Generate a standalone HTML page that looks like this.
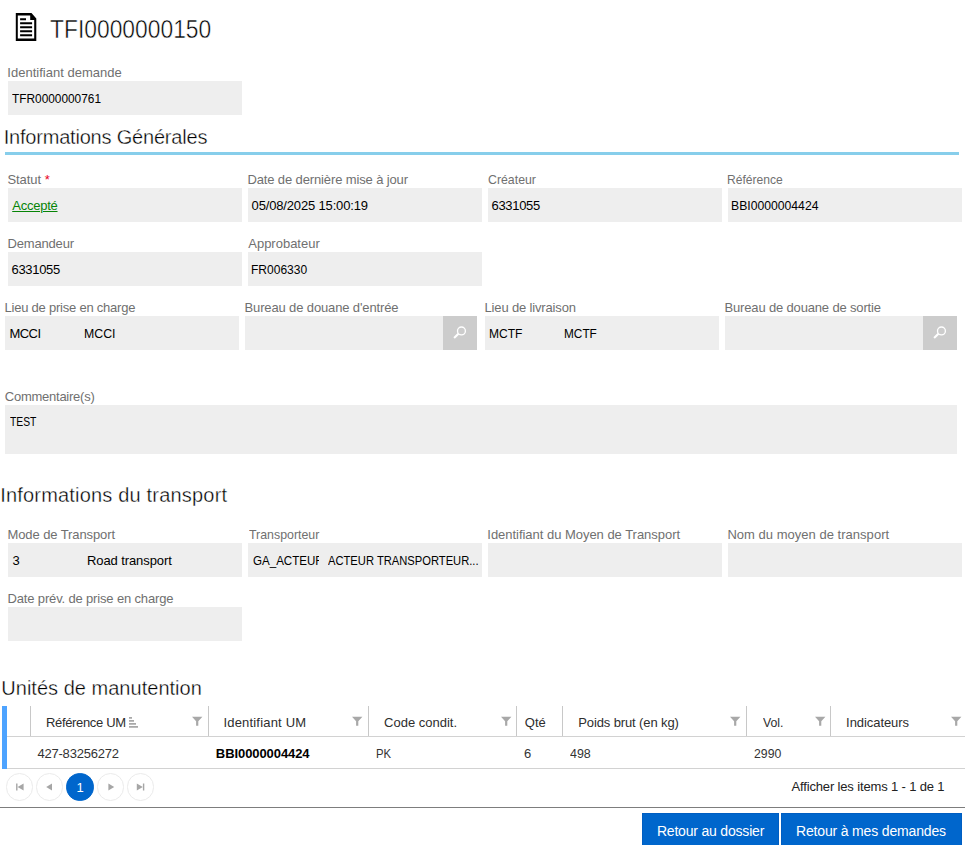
<!DOCTYPE html>
<html lang="fr">
<head>
<meta charset="utf-8">
<title>TFI0000000150</title>
<style>
*{box-sizing:border-box;margin:0;padding:0}
html,body{width:965px;height:845px;overflow:hidden;background:#fff}
body{position:relative;font-family:"Liberation Sans",Arial,sans-serif;color:#000}
.t{position:absolute;white-space:nowrap;line-height:1;display:block;font-weight:400;transform-origin:0 50%}
.title{color:#000;-webkit-text-stroke:0.5px #fff}
.h2{color:#000;-webkit-text-stroke:0.36px #fff}
.lbl{color:#707070}
.val{color:#000}
.link{color:#068406;text-decoration:underline;text-underline-offset:1px;text-decoration-thickness:1px}
.th{color:#2e2e2e}
.td{color:#333}
.tdb{color:#000;font-weight:700}
.pinfo{color:#222}
.btxt{color:#fff}
.pg1{color:#fff}
.req{color:#e8001c}
.box{position:absolute;background:#eee;height:34px}
.sbtn{position:absolute;background:#ccc;width:34px;height:34px;border:0}
.sbtn svg{position:absolute;left:0;top:0}
.rule{position:absolute;left:5px;width:954px;top:152px;height:3px;background:#87ceeb}
.bar{position:absolute;left:2px;top:706px;width:5px;height:63px;background:#4da3ff}
.hl{position:absolute;height:1px;background:#d2d2d2}
.vsep{position:absolute;top:706px;width:1px;height:30px;background:#c8c8c8}
.pc{position:absolute;top:773.3px;width:27.4px;height:27.4px;border-radius:50%;border:1px solid #ebebeb;background:#fff}
.pc.on{background:#0066cc;border-color:#0066cc}
.btn{position:absolute;top:813px;height:38px;background:#0066cc;border:1px solid #005ec2}
.ic{position:absolute;overflow:visible}
.clip{position:absolute;overflow:hidden;height:34px}
</style>
</head>
<body>
<header>
<svg class="ic" style="left:15px;top:12px" width="23" height="30" viewBox="15 12 23 30" aria-hidden="true">
<path fill-rule="evenodd" d="M15.8 13.1 H31.5 L36.3 18.4 V40.9 H15.8 Z M17.8 15.5 V38.4 H34.2 V20 H30.2 V15.5 Z" fill="#000"/>
<path d="M20.1 19.2 H26 M20.1 23.2 H32.1 M20.1 27.2 H32.1 M20.1 31.2 H32.1 M20.1 35.2 H32.1" stroke="#000" stroke-width="2" fill="none"/>
</svg>
<h1 class="t title" style="left:49.89px;top:16.84px;font-size:25px;transform:scaleX(0.9135)">TFI0000000150</h1>
</header>
<main>
<section>
<label class="t lbl" style="left:7.30px;top:66.00px;font-size:13px;letter-spacing:0.016px">Identifiant demande</label>
<div class="box" style="left:8px;top:81px;width:234px;height:34px"></div>
<span class="t val" style="left:11.79px;top:92.00px;font-size:13px;transform:scaleX(0.9122)">TFR0000000761</span>
</section>
<section>
<h2 class="t h2" style="left:3.64px;top:127.07px;font-size:20px;letter-spacing:-0.196px">Informations Générales</h2>
<div class="rule"></div>
<label class="t lbl" style="left:7.46px;top:173.00px;font-size:13px;letter-spacing:-0.069px">Statut</label>
<span class="t req" style="left:44.70px;top:173.00px;font-size:13px">*</span>
<div class="box" style="left:8px;top:188px;width:234px;height:34px"></div>
<a class="t link" style="left:12.22px;top:199.00px;font-size:13px;letter-spacing:-0.239px">Accepté</a>
<label class="t lbl" style="left:247.44px;top:173.00px;font-size:13px;letter-spacing:-0.127px">Date de dernière mise à jour</label>
<div class="box" style="left:248px;top:188px;width:234px;height:34px"></div>
<span class="t val" style="left:251.57px;top:199.00px;font-size:13px;letter-spacing:-0.157px">05/08/2025 15:00:19</span>
<label class="t lbl" style="left:487.71px;top:173.00px;font-size:13px;transform:scaleX(0.9486)">Créateur</label>
<div class="box" style="left:488px;top:188px;width:234px;height:34px"></div>
<span class="t val" style="left:491.55px;top:199.00px;font-size:13px;letter-spacing:-0.318px">6331055</span>
<label class="t lbl" style="left:727.32px;top:173.00px;font-size:13px;transform:scaleX(0.9294)">Référence</label>
<div class="box" style="left:728px;top:188px;width:234px;height:34px"></div>
<span class="t val" style="left:730.98px;top:199.00px;font-size:13px;transform:scaleX(0.9376)">BBI0000004424</span>
<label class="t lbl" style="left:7.44px;top:237.00px;font-size:13px;letter-spacing:-0.168px">Demandeur</label>
<div class="box" style="left:8px;top:252px;width:234px;height:34px"></div>
<span class="t val" style="left:11.55px;top:263.00px;font-size:13px;letter-spacing:-0.318px">6331055</span>
<label class="t lbl" style="left:248.25px;top:237.00px;font-size:13px;letter-spacing:-0.005px">Approbateur</label>
<div class="box" style="left:248px;top:252px;width:234px;height:34px"></div>
<span class="t val" style="left:251.22px;top:263.00px;font-size:13px;transform:scaleX(0.9245)">FR006330</span>
<label class="t lbl" style="left:4.50px;top:301.00px;font-size:13px;letter-spacing:-0.226px">Lieu de prise en charge</label>
<div class="box" style="left:5px;top:316px;width:234px;height:34px"></div>
<span class="t val" style="left:9.50px;top:327.00px;font-size:13px;letter-spacing:-0.561px">MCCI</span>
<span class="t val" style="left:84.00px;top:327.00px;font-size:13px;transform:scaleX(0.9486)">MCCI</span>
<label class="t lbl" style="left:244.50px;top:301.00px;font-size:13px;letter-spacing:-0.132px">Bureau de douane d'entrée</label>
<div class="box" style="left:245px;top:316px;width:198px;height:34px"></div>
<button class="sbtn" style="left:443px;top:316px" aria-label="Rechercher"><svg width="34" height="34" viewBox="0 0 34 34"><circle cx="18.45" cy="14.9" r="3.95" fill="none" stroke="#fff" stroke-width="1.35"/><path d="M15.4 17.8 L11.1 22.1" stroke="#fff" stroke-width="2.1"/></svg></button>
<label class="t lbl" style="left:484.50px;top:301.00px;font-size:13px;letter-spacing:-0.153px">Lieu de livraison</label>
<div class="box" style="left:485px;top:316px;width:234px;height:34px"></div>
<span class="t val" style="left:489.22px;top:327.00px;font-size:13px;transform:scaleX(0.9266)">MCTF</span>
<span class="t val" style="left:563.95px;top:327.00px;font-size:13px;transform:scaleX(0.9099)">MCTF</span>
<label class="t lbl" style="left:724.50px;top:301.00px;font-size:13px;letter-spacing:-0.160px">Bureau de douane de sortie</label>
<div class="box" style="left:725px;top:316px;width:198px;height:34px"></div>
<button class="sbtn" style="left:923px;top:316px" aria-label="Rechercher"><svg width="34" height="34" viewBox="0 0 34 34"><circle cx="18.45" cy="14.9" r="3.95" fill="none" stroke="#fff" stroke-width="1.35"/><path d="M15.4 17.8 L11.1 22.1" stroke="#fff" stroke-width="2.1"/></svg></button>
<label class="t lbl" style="left:4.79px;top:390.00px;font-size:13px;letter-spacing:-0.250px">Commentaire(s)</label>
<div class="box" style="left:5px;top:405px;width:952px;height:49px"></div>
<span class="t val" style="left:10.04px;top:415.00px;font-size:13px;transform:scaleX(0.7937)">TEST</span>
</section>
<section>
<h2 class="t h2" style="left:0.16px;top:485.07px;font-size:20px;letter-spacing:0.191px">Informations du transport</h2>
<label class="t lbl" style="left:7.50px;top:528.00px;font-size:13px;letter-spacing:-0.098px">Mode de Transport</label>
<div class="box" style="left:8px;top:543px;width:234px;height:34px"></div>
<span class="t val" style="left:12.60px;top:554.00px;font-size:13px">3</span>
<span class="t val" style="left:86.98px;top:554.00px;font-size:13px;letter-spacing:-0.089px">Road transport</span>
<label class="t lbl" style="left:248.63px;top:528.00px;font-size:13px;transform:scaleX(0.9513)">Transporteur</label>
<div class="box" style="left:248px;top:543px;width:234px;height:34px"></div>
<div class="clip" style="left:248px;top:543px;width:71.2px"><span class="t val" style="left:5px;top:11.00px;font-size:13px;transform:scaleX(0.8895)">GA_ACTEUR</span></div>
<span class="t val" style="left:327.88px;top:554.00px;font-size:13px;transform:scaleX(0.8603)">ACTEUR TRANSPORTEUR...</span>
<label class="t lbl" style="left:487.30px;top:528.00px;font-size:13px;letter-spacing:-0.028px">Identifiant du Moyen de Transport</label>
<div class="box" style="left:488px;top:543px;width:234px;height:34px"></div>
<label class="t lbl" style="left:727.42px;top:528.00px;font-size:13px;letter-spacing:0.023px">Nom du moyen de transport</label>
<div class="box" style="left:728px;top:543px;width:234px;height:34px"></div>
<label class="t lbl" style="left:7.50px;top:592.00px;font-size:13px;letter-spacing:-0.154px">Date prév. de prise en charge</label>
<div class="box" style="left:8px;top:607px;width:234px;height:34px"></div>
</section>
<section>
<h2 class="t h2" style="left:1.27px;top:678.07px;font-size:20px;letter-spacing:0.023px">Unités de manutention</h2>
<div class="bar"></div>
<div class="hl" style="left:7px;top:736px;width:958px"></div>
<div class="hl" style="left:7px;top:768px;width:958px"></div>
<div class="vsep" style="left:30px"></div>
<div class="vsep" style="left:208px"></div>
<div class="vsep" style="left:368px"></div>
<div class="vsep" style="left:516px"></div>
<div class="vsep" style="left:562px"></div>
<div class="vsep" style="left:746px"></div>
<div class="vsep" style="left:830px"></div>
<span class="t th" style="left:46.04px;top:716.00px;font-size:13px;letter-spacing:-0.344px">Référence UM</span>
<svg class="ic" style="left:129px;top:717px" width="10" height="11" viewBox="0 0 10 11" aria-hidden="true"><path d="M0 0.9 H3 M0 3.9 H5 M0 6.9 H7 M0 9.9 H9" stroke="#a8a8a8" stroke-width="1.9"/></svg>
<svg class="ic" style="left:191.7px;top:715.6px" width="11" height="11" viewBox="0 0 11 11" aria-hidden="true"><path d="M0 0.7 H10.4 L6.3 5.3 V9.8 H4.1 V5.3 Z" fill="#a8a8a8"/></svg>
<span class="t th" style="left:223.42px;top:716.00px;font-size:13px;letter-spacing:0.192px">Identifiant UM</span>
<svg class="ic" style="left:352.3px;top:715.6px" width="11" height="11" viewBox="0 0 11 11" aria-hidden="true"><path d="M0 0.7 H10.4 L6.3 5.3 V9.8 H4.1 V5.3 Z" fill="#a8a8a8"/></svg>
<span class="t th" style="left:384.11px;top:716.00px;font-size:13px;letter-spacing:-0.006px">Code condit.</span>
<svg class="ic" style="left:500.9px;top:715.6px" width="11" height="11" viewBox="0 0 11 11" aria-hidden="true"><path d="M0 0.7 H10.4 L6.3 5.3 V9.8 H4.1 V5.3 Z" fill="#a8a8a8"/></svg>
<span class="t th" style="left:524.80px;top:716.00px;font-size:13px;letter-spacing:-0.002px">Qté</span>
<span class="t th" style="left:578.24px;top:716.00px;font-size:13px;letter-spacing:-0.116px">Poids brut (en kg)</span>
<svg class="ic" style="left:729.8px;top:715.6px" width="11" height="11" viewBox="0 0 11 11" aria-hidden="true"><path d="M0 0.7 H10.4 L6.3 5.3 V9.8 H4.1 V5.3 Z" fill="#a8a8a8"/></svg>
<span class="t th" style="left:762.97px;top:716.00px;font-size:13px;transform:scaleX(0.9457)">Vol.</span>
<svg class="ic" style="left:814.6px;top:715.6px" width="11" height="11" viewBox="0 0 11 11" aria-hidden="true"><path d="M0 0.7 H10.4 L6.3 5.3 V9.8 H4.1 V5.3 Z" fill="#a8a8a8"/></svg>
<span class="t th" style="left:846.12px;top:716.00px;font-size:13px;letter-spacing:-0.070px">Indicateurs</span>
<svg class="ic" style="left:950.5px;top:715.6px" width="11" height="11" viewBox="0 0 11 11" aria-hidden="true"><path d="M0 0.7 H10.4 L6.3 5.3 V9.8 H4.1 V5.3 Z" fill="#a8a8a8"/></svg>
<span class="t td" style="left:37.42px;top:747.00px;font-size:13px;letter-spacing:-0.204px">427-83256272</span>
<b class="t tdb" style="left:215.85px;top:747.00px;font-size:13px;letter-spacing:-0.079px">BBI0000004424</b>
<span class="t td" style="left:375.74px;top:747.00px;font-size:13px;transform:scaleX(0.8715)">PK</span>
<span class="t td" style="left:524.10px;top:747.00px;font-size:13px">6</span>
<span class="t td" style="left:570.40px;top:747.00px;font-size:13px;transform:scaleX(0.9578)">498</span>
<span class="t td" style="left:753.90px;top:747.00px;font-size:13px;transform:scaleX(0.9438)">2990</span>
<div class="pc" style="left:5.6px"></div>
<div class="pc" style="left:35.9px"></div>
<div class="pc on" style="left:66.3px"></div>
<div class="pc" style="left:96.6px"></div>
<div class="pc" style="left:126.8px"></div>
<svg class="ic" style="left:0;top:773px" width="160" height="28" viewBox="0 773 160 28" aria-hidden="true"><path d="M16.1 783.4 H17.5 V790.6 H16.1 Z M23.6 783.4 V790.6 L17.6 787 Z" fill="#a6a6a6"/><path d="M52 783.6 V790.4 L46.2 787 Z" fill="#a6a6a6"/><path d="M108.4 783.6 V790.4 L114.2 787 Z" fill="#a6a6a6"/><path d="M136.8 783.4 V790.6 L142.8 787 Z M142.9 783.4 H144.3 V790.6 H142.9 Z" fill="#a6a6a6"/></svg>
<span class="t pg1" style="left:76.47px;top:781.00px;font-size:13px">1</span>
<span class="t pinfo" style="left:791.48px;top:780.00px;font-size:13px;letter-spacing:-0.151px">Afficher les items 1 - 1 de 1</span>
<div class="hl" style="left:0;top:807px;width:965px;background:#7d7d7d"></div>
</section>
</main>
<footer>
<button class="btn" style="left:642px;width:137px"></button>
<button class="btn" style="left:781px;width:180.5px"></button>
<span class="t btxt" style="left:656.89px;top:824.15px;font-size:14px;letter-spacing:-0.190px">Retour au dossier</span>
<span class="t btxt" style="left:795.94px;top:824.15px;font-size:14px;letter-spacing:-0.158px">Retour à mes demandes</span>
</footer>
</body>
</html>
